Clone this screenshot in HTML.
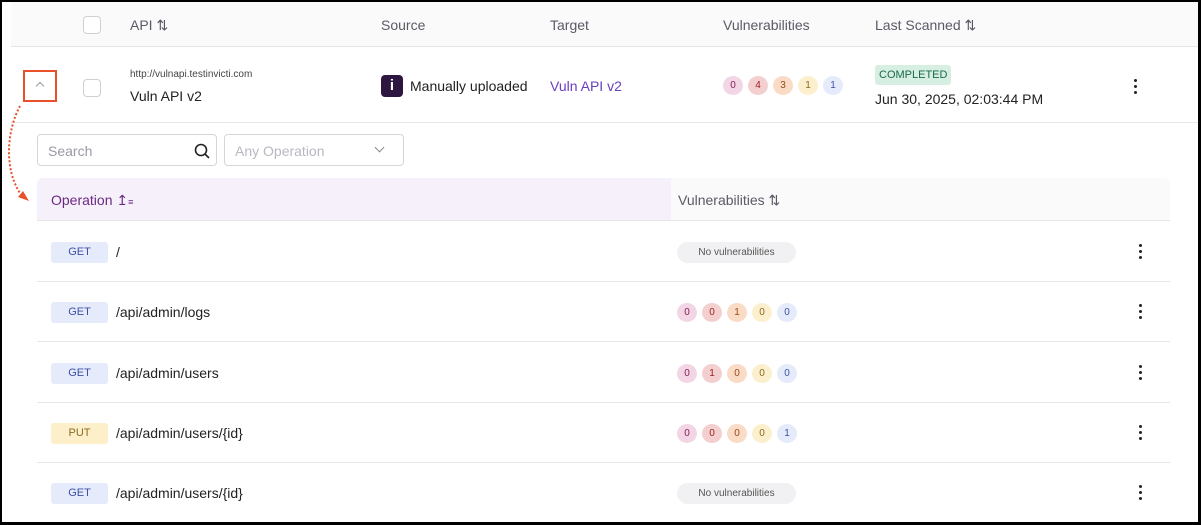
<!DOCTYPE html>
<html><head><style>
*{box-sizing:border-box;margin:0;padding:0}
body{width:1201px;height:525px;background:#000;font-family:"Liberation Sans",sans-serif;position:relative;overflow:hidden}
.pg{position:absolute;left:2px;top:2px;width:1196px;height:520px;background:#fff;overflow:hidden}
.a{position:absolute}
.hdr{left:9px;top:0;width:1187px;height:45px;background:#fafafb;border-bottom:1px solid #e6e6e9}
.ht{font-size:14px;color:#5a5a66;top:15px}
.cb{width:18px;height:18px;border:1px solid #cfd0d6;border-radius:4px;background:#fff}
.row{left:9px;top:45px;width:1187px;height:76px;border-bottom:1px solid #e6e6e9}
.inp{height:32px;border:1px solid #d5d6dc;border-radius:4px;font-size:14px;color:#9a9aa5;padding:8px 10px}
.oph{left:35px;top:176px;width:1133px;height:43px;background:#fafafb;border-radius:6px 6px 0 0;overflow:hidden;border-bottom:1px solid #e6e6e9}
.r{left:35px;width:1133px;height:60px;border-bottom:1px solid #e6e6e9}
.bd{position:absolute;left:14px;top:20px;width:57px;height:21px;border-radius:3px;font-size:11px;text-align:center;line-height:21px}
.get{background:#e6ebfb;color:#3d50a5}.put{background:#fdefc9;color:#8a6a20}
.p{position:absolute;left:79px;top:22px;font-size:14px;color:#222}
.cs{position:absolute;left:640px;top:21px;display:flex;gap:5px}
.c{width:20px;height:19px;border-radius:50%;font-size:10px;text-align:center;line-height:19px}
.c1{background:#f3d6e6;color:#8a1d55}.c2{background:#f3d0cf;color:#9c1e1e}.c3{background:#fadbc6;color:#9a4a14}.c4{background:#fcefcd;color:#8a6a20}.c5{background:#e6ebfb;color:#3d50a5}
.nv{position:absolute;left:640px;top:20px;width:119px;height:21px;border-radius:11px;background:#f1f1f3;font-size:10px;color:#555;text-align:center;line-height:21px}
.k{position:absolute;left:1102px;top:22px;width:4px}
.k i{display:block;width:3px;height:3px;background:#222;border-radius:50%;margin-bottom:3px}
</style></head><body><div class="pg">
<div class="a hdr"></div>
<div class="a cb" style="left:81px;top:14px"></div>
<div class="a ht" style="left:128px">API &#8645;</div>
<div class="a ht" style="left:379px">Source</div>
<div class="a ht" style="left:548px">Target</div>
<div class="a ht" style="left:721px">Vulnerabilities</div>
<div class="a ht" style="left:873px">Last Scanned &#8645;</div>
<div class="a row"></div>
<div class="a" style="left:21px;top:68px;width:34px;height:32px;border:2px solid #e8502a"></div>
<div class="a" style="left:35px;top:81px;width:6px;height:6px;border-left:1px solid #999;border-top:1px solid #999;transform:rotate(45deg)"></div>
<div class="a cb" style="left:81px;top:77px"></div>
<div class="a" style="left:128px;top:67px;font-size:10px;color:#444">http://vulnapi.testinvicti.com</div>
<div class="a" style="left:128px;top:86px;font-size:14px;color:#222">Vuln API v2</div>
<div class="a" style="left:379px;top:73px;width:22px;height:22px;background:#2d1740;border-radius:4px;color:#fff;font-weight:bold;font-size:15px;text-align:center;line-height:22px">i</div>
<div class="a" style="left:408px;top:76px;font-size:14px;color:#222">Manually uploaded</div>
<div class="a" style="left:548px;top:76px;font-size:14px;color:#6a3fc0">Vuln API v2</div>
<div class="a cs" style="left:721px;top:74px"><div class="c c1">0</div><div class="c c2">4</div><div class="c c3">3</div><div class="c c4">1</div><div class="c c5">1</div></div>
<div class="a" style="left:873px;top:63px;height:20px;padding:0 4px;background:#d6efe2;color:#1a6a4a;font-size:11px;line-height:20px;border-radius:3px">COMPLETED</div>
<div class="a" style="left:873px;top:89px;font-size:14px;color:#222">Jun 30, 2025, 02:03:44 PM</div>
<div class="a k" style="left:1132px;top:77px"><i></i><i></i><i></i></div>
<svg class="a" style="left:2px;top:100px" width="40" height="104"><path d="M16 4 C2 30 0 70 18 94" fill="none" stroke="#e8502a" stroke-width="2" stroke-dasharray="2 2"/><path d="M14 95 L25 99 L19 89 Z" fill="#e8502a"/></svg>
<div class="a inp" style="left:35px;top:132px;width:180px">Search</div>
<svg class="a" style="left:192px;top:141px" width="16" height="16"><circle cx="7" cy="7" r="5.5" fill="none" stroke="#222" stroke-width="1.6"/><path d="M11 11 L15 15" stroke="#222" stroke-width="1.6"/></svg>
<div class="a inp" style="left:222px;top:132px;width:180px;color:#b8b8c0">Any Operation</div>
<div class="a" style="left:374px;top:142px;width:7px;height:7px;border-right:1px solid #888;border-bottom:1px solid #888;transform:rotate(45deg)"></div>
<div class="a oph"><div class="a" style="left:0;top:0;width:634px;height:43px;background:#f6f0fb"></div>
<div class="a" style="left:14px;top:14px;font-size:14px;color:#6a2a80">Operation &#8613;<span style="font-size:9px">&#8801;</span></div>
<div class="a" style="left:641px;top:14px;font-size:14px;color:#5a5a66">Vulnerabilities &#8645;</div></div>
<div class="a r" style="top:220px"><div class="bd get">GET</div><div class="p">/</div><div class="nv">No vulnerabilities</div><div class="k"><i></i><i></i><i></i></div></div>
<div class="a r" style="top:280px"><div class="bd get">GET</div><div class="p">/api/admin/logs</div><div class="cs"><div class="c c1">0</div><div class="c c2">0</div><div class="c c3">1</div><div class="c c4">0</div><div class="c c5">0</div></div><div class="k"><i></i><i></i><i></i></div></div>
<div class="a r" style="top:341px"><div class="bd get">GET</div><div class="p">/api/admin/users</div><div class="cs"><div class="c c1">0</div><div class="c c2">1</div><div class="c c3">0</div><div class="c c4">0</div><div class="c c5">0</div></div><div class="k"><i></i><i></i><i></i></div></div>
<div class="a r" style="top:401px"><div class="bd put">PUT</div><div class="p">/api/admin/users/{id}</div><div class="cs"><div class="c c1">0</div><div class="c c2">0</div><div class="c c3">0</div><div class="c c4">0</div><div class="c c5">1</div></div><div class="k"><i></i><i></i><i></i></div></div>
<div class="a r" style="top:461px;border:none"><div class="bd get">GET</div><div class="p">/api/admin/users/{id}</div><div class="nv">No vulnerabilities</div><div class="k"><i></i><i></i><i></i></div></div>
</div></body></html>
